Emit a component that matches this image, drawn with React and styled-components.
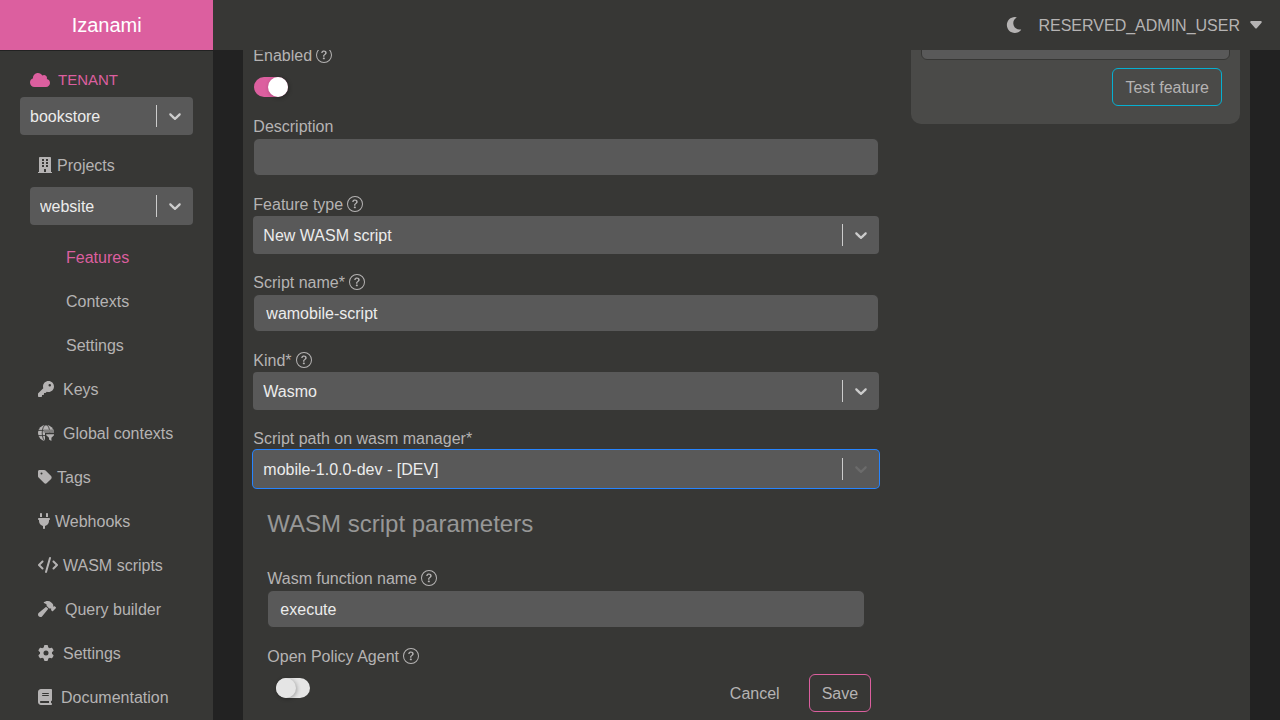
import React from "react";
import styled, { createGlobalStyle } from "styled-components";
import { FaBuilding, FaMoon } from "react-icons/fa";
import { FaCloud, FaKey, FaTag, FaPlug, FaCode, FaHammer, FaGear, FaBook } from "react-icons/fa6";
import { BsCaretDownFill, BsQuestionCircle } from "react-icons/bs";

const color = {
  panel: "#373735",
  page: "#222222",
  field: "#595959",
  card: "#4a4a48",
  pink: "#dc5f9f",
  text: "#b5b3b3",
  bright: "#ececec",
  cyan: "#06b0d1",
  focus: "#2684ff",
};

const GlobalStyle = createGlobalStyle`
  *, *::before, *::after { box-sizing: border-box; }
  body {
    margin: 0;
    background: ${color.page};
    color: ${color.text};
    font: 16px/24px "Liberation Sans", Arial, sans-serif;
  }
  button, input, select, textarea { font: inherit; color: inherit; }
  svg { flex: none; }
`;

const Page = styled.div`
  height: 100vh;
  display: flex;
  flex-direction: column;
  overflow: hidden;
`;

const Header = styled.header`
  display: grid;
  grid-template-columns: 1fr 5fr;
  flex: 0 0 50px;
  background: ${color.panel};
`;

const Brand = styled.a`
  display: flex;
  align-items: center;
  justify-content: center;
  background: ${color.pink};
  color: #fff;
  font-size: 20px;
  text-decoration: none;
`;

const HeaderActions = styled.div`
  display: flex;
  align-items: center;
  justify-content: flex-end;
  gap: 16px;
  padding-right: 16px;
`;

const PlainButton = styled.button`
  display: flex;
  align-items: center;
  gap: 8px;
  padding: 0;
  border: 0;
  background: none;
`;

const Caption = styled.span`
  padding-top: 2px;
`;

const Glyph = styled.span`
  display: flex;
  flex: none;
  svg {
    width: ${(p) => p.$width}px;
    height: 16px;
  }
`;

const Body = styled.div`
  display: grid;
  grid-template-columns: 1fr 5fr;
  flex: 1;
  min-height: 0;
`;

const Sidebar = styled.aside`
  border-top: 1px solid ${color.page};
  background: ${color.panel};
  padding: 16px 20px 0;
  overflow: hidden;
`;

const TenantTitle = styled.h2`
  display: flex;
  align-items: center;
  gap: 8px;
  margin: 0;
  padding: 0 10px 4px;
  height: 30px;
  color: ${color.pink};
  font-size: 15px;
  font-weight: 400;
`;

const NavList = styled.ul`
  list-style: none;
  margin: 0;
  padding: 0;
`;

const ProjectPicker = styled.li`
  padding: 0 0 10px 10px;
`;

const NavLink = styled.a`
  display: flex;
  align-items: center;
  gap: ${(p) => (p.$wide ? 9 : 5)}px;
  height: 44px;
  padding-left: ${(p) => (p.$nested ? 46 : 18)}px;
  color: ${(p) => (p.$active ? color.pink : color.text)};
  text-decoration: none;
  white-space: nowrap;
`;

const ProjectsLink = styled(NavLink)`
  height: 52px;
  padding-top: 8px;
`;

const Main = styled.main`
  padding: 0 30px;
  overflow: hidden;
  min-width: 0;
`;

const Panel = styled.div`
  display: grid;
  grid-template-columns: 2fr 1fr;
  min-height: 100%;
  padding: 0 10px;
  background: ${color.panel};
`;

const Form = styled.form`
  display: flex;
  flex-direction: column;
  gap: 16px;
  margin-top: -7px;
  padding-right: 32px;
`;

const Field = styled.div`
  display: flex;
  flex-direction: column;
`;

const FieldHead = styled.div`
  display: flex;
  align-items: center;
  gap: 4px;
  height: 24px;
`;

const Label = styled.label`
  padding-top: 2px;
`;

const TextInput = styled.input`
  height: 38px;
  width: 100%;
  padding: 2px 12px 0;
  border: 1px solid ${color.panel};
  border-radius: 6px;
  background: ${color.field};
  color: ${color.bright};
  outline: none;
`;

const SelectBox = styled.div`
  position: relative;
  height: 38px;
  border-radius: 4px;
  background: ${color.field};
  box-shadow: ${(p) => (p.$focused ? `0 0 0 1px ${color.focus}` : "none")};
`;

const NativeSelect = styled.select`
  appearance: none;
  width: 100%;
  height: 100%;
  padding: 2px 40px 0 10px;
  border: 0;
  border-radius: 4px;
  background: transparent;
  color: ${color.bright};
  outline: none;
`;

const SelectIndicator = styled.span`
  position: absolute;
  top: 8px;
  right: 0;
  bottom: 8px;
  display: flex;
  align-items: center;
  padding: 0 8px;
  border-left: 1px solid #cccccc;
  color: ${(p) => (p.$dim ? "#6b6b6b" : "#cccccc")};
  pointer-events: none;
`;

const Switch = styled.input`
  appearance: none;
  width: 34px;
  height: 20px;
  margin: 10px 0 0 ${(p) => (p.$indent ? 9 : 1)}px;
  border-radius: 10px;
  background: #e5e5e5;
  &::before {
    content: "";
    display: block;
    width: 20px;
    height: 20px;
    border-radius: 50%;
    background: #e5e5e5;
    box-shadow: 1px 1px 4px rgba(0, 0, 0, 0.3);
  }
  &:checked {
    background: ${color.pink};
  }
  &:checked::before {
    margin-left: 14px;
    background: #fff;
  }
`;

const SwitchField = styled(Field)`
  min-height: 55px;
`;

const Parameters = styled.section`
  display: flex;
  flex-direction: column;
  gap: 16px;
  padding: 4px 14px 0;
`;

const ParametersTitle = styled.h4`
  margin: 0 0 10px;
  color: #979797;
  font-size: 24px;
  font-weight: 400;
  line-height: 32px;
`;

const BottomRow = styled.div`
  display: flex;
  justify-content: space-between;
  height: 68px;
  margin-right: -6px;
`;

const Actions = styled.div`
  display: flex;
  align-items: flex-end;
  gap: 16px;
`;

const Button = styled.button`
  height: 38px;
  padding: 2px 12px 0;
  border: 1px solid ${(p) => p.$outline || "transparent"};
  border-radius: 6px;
  background: transparent;
`;

const TestCard = styled.section`
  align-self: start;
  display: flex;
  flex-direction: column;
  align-items: flex-end;
  gap: 8px;
  margin-top: -50px;
  padding: 10px 10px 18px;
  border-radius: 0 0 10px 10px;
  background: ${color.card};
`;

const Payload = styled.textarea`
  display: block;
  width: 100%;
  height: 50px;
  border: 1px solid ${color.panel};
  border-radius: 6px;
  background: ${color.field};
  resize: none;
`;

const TestActions = styled.div`
  padding-right: 8px;
`;

const Chevron = () => (
  <svg width="20" height="20" viewBox="0 0 20 20" fill="currentColor" aria-hidden="true">
    <path d="M4.516 7.548c0.436-0.446 1.043-0.481 1.576 0l3.908 3.747 3.908-3.747c0.533-0.481 1.141-0.446 1.574 0 0.436 0.445 0.408 1.197 0 1.615-0.406 0.418-4.695 4.502-4.695 4.502-0.217 0.223-0.502 0.335-0.787 0.335s-0.57-0.112-0.789-0.335c0 0-4.287-4.084-4.695-4.502s-0.436-1.17 0-1.615z" />
  </svg>
);

const GlobeFilter = () => (
  <svg width="16" height="16" viewBox="0 0 16 16" aria-hidden="true">
    <circle cx="8" cy="8" r="8" fill={color.text} />
    <g fill="none" stroke={color.panel} strokeWidth="0.9">
      <ellipse cx="8" cy="8" rx="3.8" ry="8.2" />
      <path d="M0 5.4h16M0 10.6h16" />
    </g>
    <path d="M7 7.5h9V16H7z" fill={color.panel} />
    <path d="M5.5 4.6H16v3H5.5z" fill="#7f7e7d" />
    <path d="M8.2 9.2H16v1l-2.6 2.6V16l-2.4-1.4v-1.8L8.2 10.2z" fill={color.text} />
  </svg>
);

function SelectControl({ id, label, value, focused }) {
  return (
    <SelectBox $focused={focused}>
      <NativeSelect id={id} aria-label={label} defaultValue={value}>
        <option>{value}</option>
      </NativeSelect>
      <SelectIndicator $dim={focused}>
        <Chevron />
      </SelectIndicator>
    </SelectBox>
  );
}

function FieldLabel({ id, children, help }) {
  return (
    <FieldHead>
      <Label htmlFor={id}>{children}</Label>
      {help && <BsQuestionCircle size={16} />}
    </FieldHead>
  );
}

const nested = ["Features", "Contexts", "Settings"];

const links = [
  { label: "Keys", icon: <FaKey />, width: 16, wide: true },
  { label: "Global contexts", icon: <GlobeFilter />, width: 16, wide: true },
  { label: "Tags", icon: <FaTag />, width: 14 },
  { label: "Webhooks", icon: <FaPlug />, width: 12 },
  { label: "WASM scripts", icon: <FaCode />, width: 20 },
  { label: "Query builder", icon: <FaHammer />, width: 18, wide: true },
  { label: "Settings", icon: <FaGear />, width: 16, wide: true },
  { label: "Documentation", icon: <FaBook />, width: 14, wide: true },
];

export default function App() {
  return (
    <Page>
      <GlobalStyle />
      <Header>
        <Brand href="#home">Izanami</Brand>
        <HeaderActions>
          <PlainButton aria-label="Dark mode">
            <FaMoon size={16} />
          </PlainButton>
          <PlainButton>
            <Caption>RESERVED_ADMIN_USER</Caption>
            <BsCaretDownFill size={16} />
          </PlainButton>
        </HeaderActions>
      </Header>
      <Body>
        <Sidebar>
          <TenantTitle>
            <Glyph $width={20}>
              <FaCloud />
            </Glyph>
            TENANT
          </TenantTitle>
          <SelectControl label="Tenant" value="bookstore" />
          <nav>
            <NavList>
              <li>
                <ProjectsLink href="#projects">
                  <Glyph $width={14}>
                    <FaBuilding />
                  </Glyph>
                  <Caption>Projects</Caption>
                </ProjectsLink>
              </li>
              <ProjectPicker>
                <SelectControl label="Project" value="website" />
              </ProjectPicker>
              {nested.map((name) => (
                <li key={name}>
                  <NavLink href={`#${name}`} $nested $active={name === "Features"}>
                    <Caption>{name}</Caption>
                  </NavLink>
                </li>
              ))}
              {links.map((link) => (
                <li key={link.label}>
                  <NavLink href={`#${link.label}`} $wide={link.wide}>
                    <Glyph $width={link.width}>{link.icon}</Glyph>
                    <Caption>{link.label}</Caption>
                  </NavLink>
                </li>
              ))}
            </NavList>
          </nav>
        </Sidebar>
        <Main>
          <Panel>
            <Form>
              <SwitchField>
                <FieldLabel id="enabled" help>Enabled</FieldLabel>
                <Switch type="checkbox" id="enabled" defaultChecked />
              </SwitchField>
              <Field>
                <FieldLabel id="description">Description</FieldLabel>
                <TextInput id="description" />
              </Field>
              <Field>
                <FieldLabel id="type" help>Feature type</FieldLabel>
                <SelectControl id="type" value="New WASM script" />
              </Field>
              <Field>
                <FieldLabel id="script" help>Script name*</FieldLabel>
                <TextInput id="script" defaultValue="wamobile-script" />
              </Field>
              <Field>
                <FieldLabel id="kind" help>Kind*</FieldLabel>
                <SelectControl id="kind" value="Wasmo" />
              </Field>
              <Field>
                <FieldLabel id="path">Script path on wasm manager*</FieldLabel>
                <SelectControl id="path" value="mobile-1.0.0-dev - [DEV]" focused />
              </Field>
              <Parameters>
                <ParametersTitle>WASM script parameters</ParametersTitle>
                <Field>
                  <FieldLabel id="function" help>Wasm function name</FieldLabel>
                  <TextInput id="function" defaultValue="execute" />
                </Field>
                <BottomRow>
                  <Field>
                    <FieldLabel id="opa" help>Open Policy Agent</FieldLabel>
                    <Switch type="checkbox" id="opa" $indent />
                  </Field>
                  <Actions>
                    <Button type="button">Cancel</Button>
                    <Button type="button" $outline={color.pink}>Save</Button>
                  </Actions>
                </BottomRow>
              </Parameters>
            </Form>
            <TestCard>
              <Payload aria-label="Payload" />
              <TestActions>
                <Button type="button" $outline={color.cyan}>Test feature</Button>
              </TestActions>
            </TestCard>
          </Panel>
        </Main>
      </Body>
    </Page>
  );
}
